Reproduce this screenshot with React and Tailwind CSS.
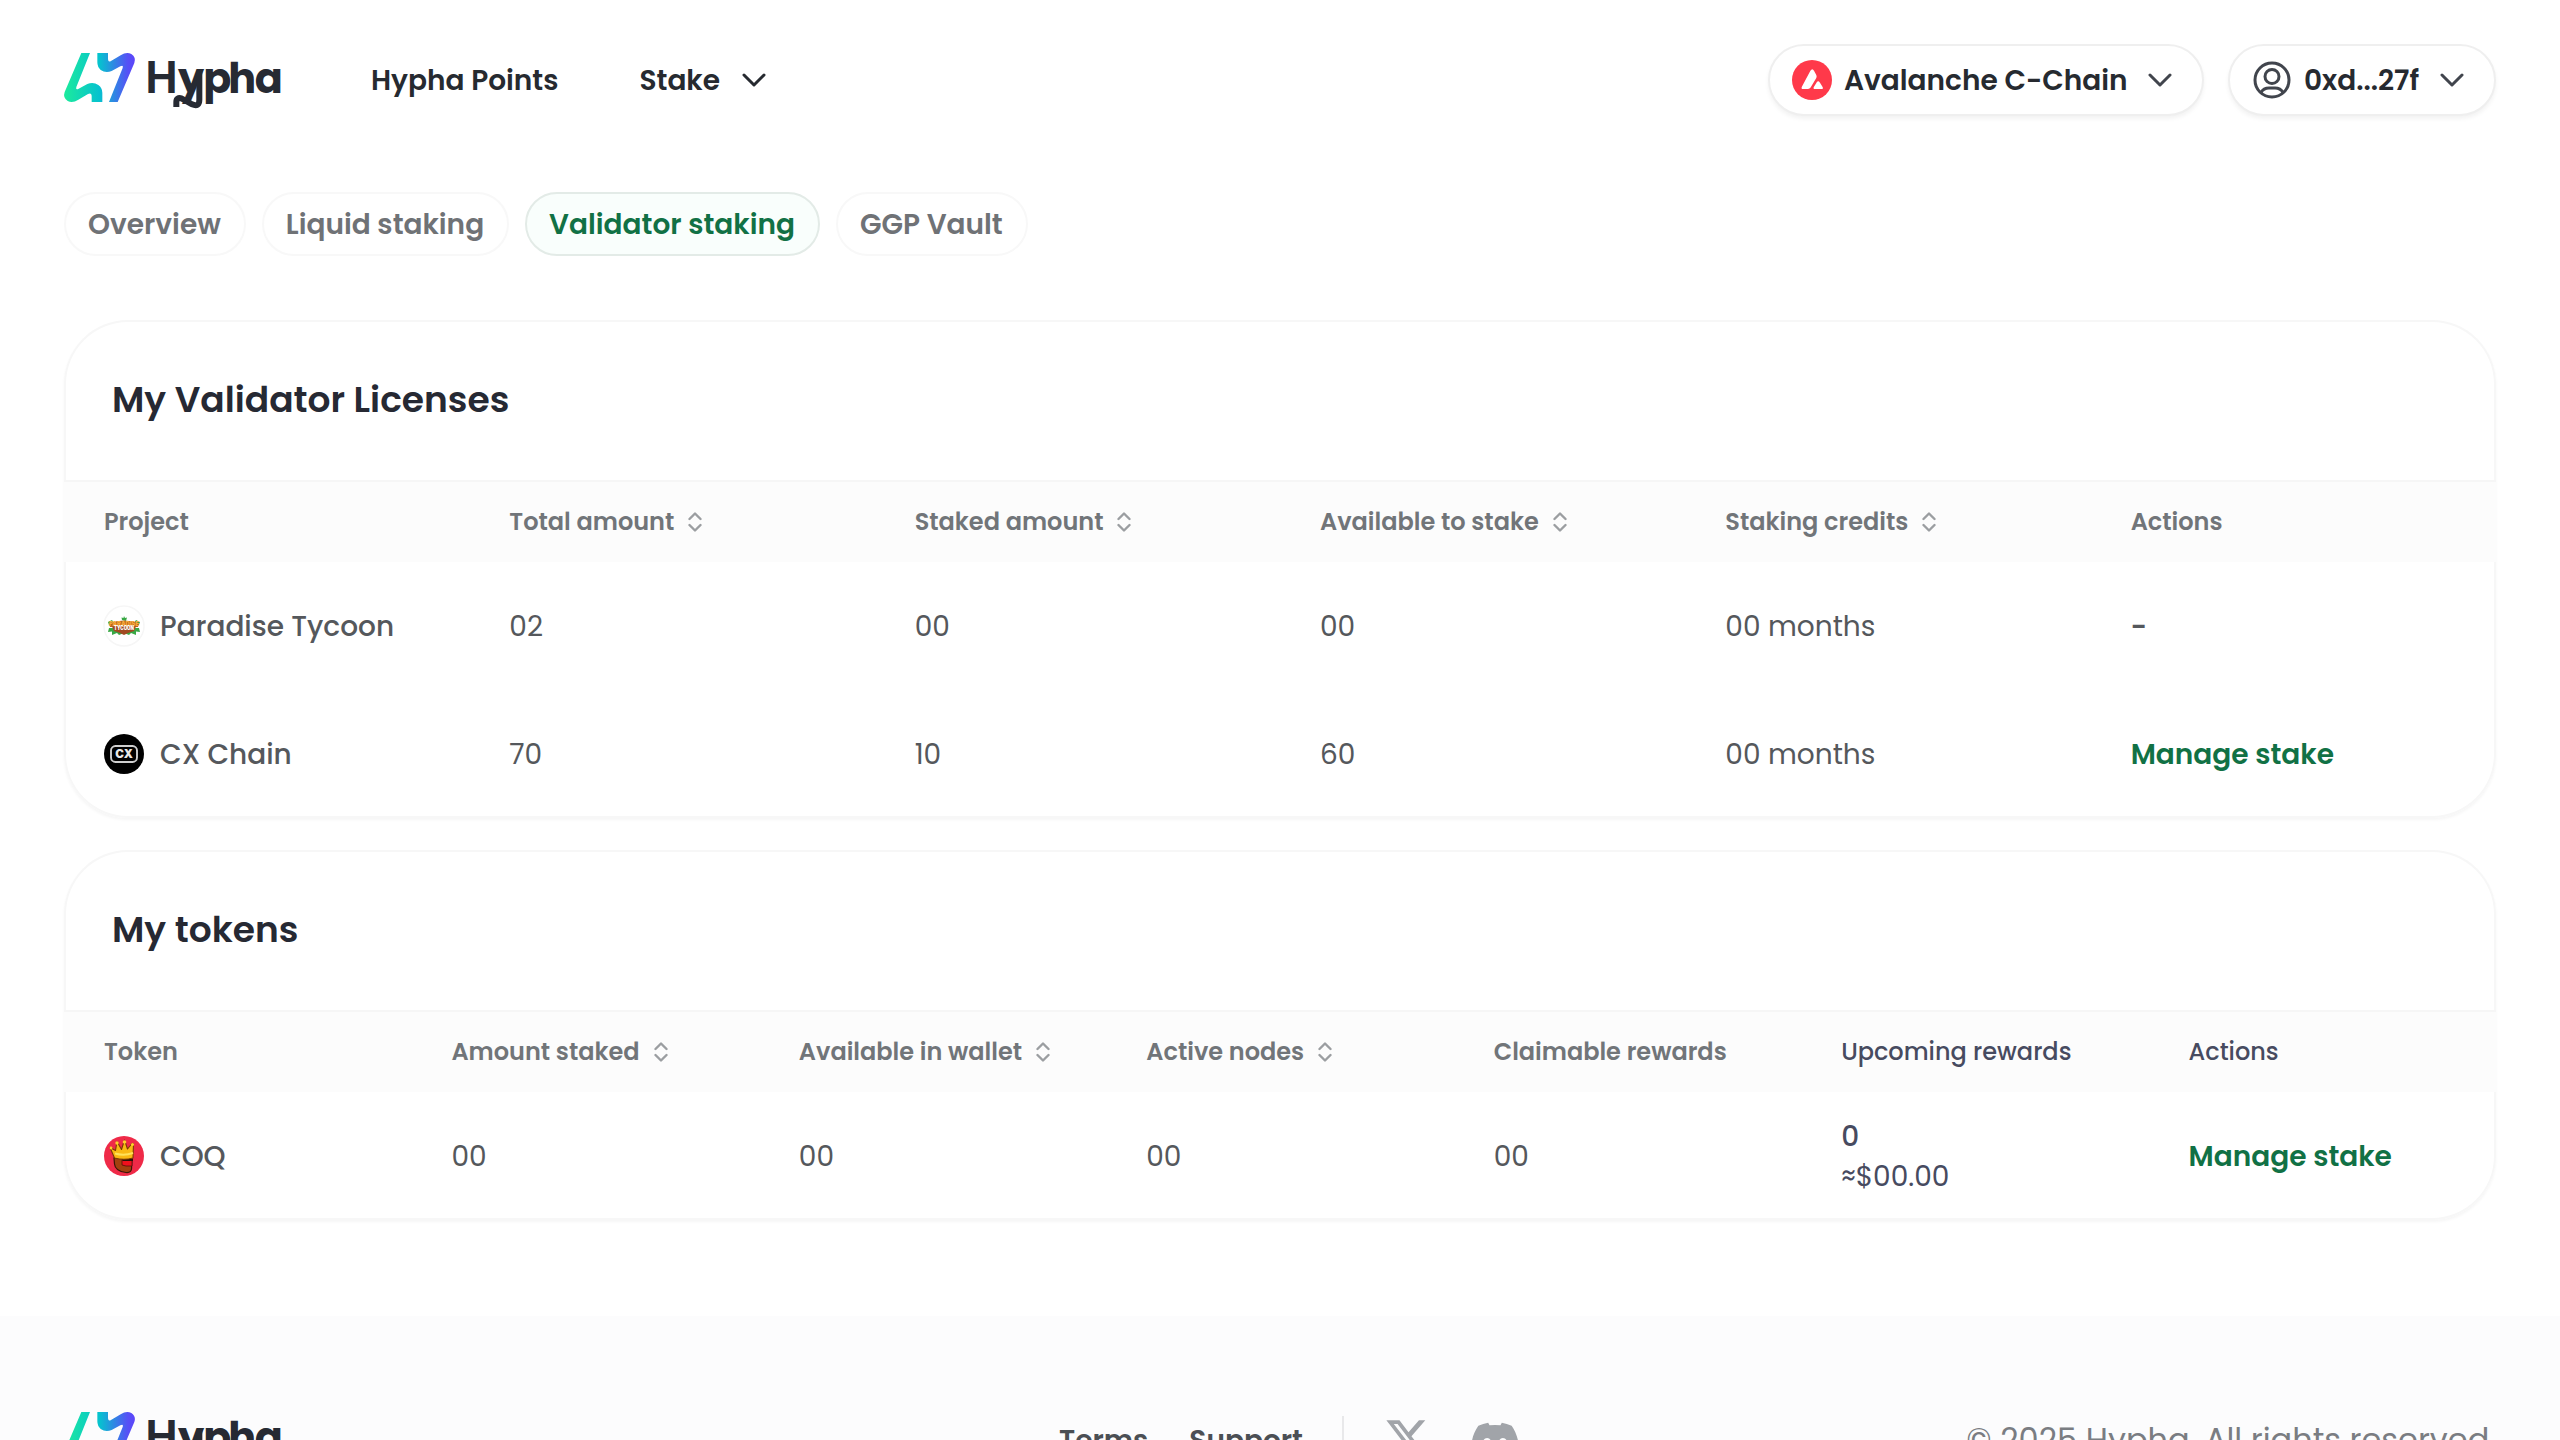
import { FaDiscord } from "react-icons/fa6";

function Logo({ id }) {
  return (
    <svg viewBox="72 60 654 177" className="h-[59px] w-[218px] shrink-0 overflow-visible">
      <defs>
        <linearGradient id={id} gradientUnits="userSpaceOnUse" x1="72" y1="0" x2="285" y2="0">
          <stop offset="0" stopColor="#1ceb9c" />
          <stop offset="0.5" stopColor="#06c2cf" />
          <stop offset="0.9" stopColor="#5650f6" />
          <stop offset="1" stopColor="#5c45fa" />
        </linearGradient>
      </defs>
      <path
        d="M124 66H150L109 168Q106 178 116 173L142 159Q160 151 175 162Q187 171 187 185V213H155V194Q154 184 144 189L115 206Q98 217 83 210Q68 200 74 183Z"
        fill={`url(#${id})`}
      />
      <path
        d="M233 213H207L248 111Q251 101 241 106L215 120Q197 128 182 117Q172 108 172 94V66H204V85Q205 95 213 90L242 73Q259 62 274 69Q289 79 283 96Z"
        fill={`url(#${id})`}
      />
      <text
        x="316 414 490 565 644"
        y="187"
        fontSize="124"
        fill="#262a33"
        className="font-['Poppins',sans-serif] font-bold"
      >
        <tspan fontSize="136" className="font-semibold">H</tspan>ypha
      </text>
      <path
        d="M409 228V213Q409 197 426 203L456 220Q478 229 478 206V119"
        fill="none"
        stroke="#262a33"
        strokeWidth="18"
      />
    </svg>
  );
}

function Chevron({ className = "" }) {
  return (
    <svg viewBox="0 0 24 14" className={`h-[14px] w-6 shrink-0 ${className}`} fill="none" stroke="currentColor" strokeWidth="3" strokeLinecap="round" strokeLinejoin="round">
      <path d="M2 2l10 10L22 2" />
    </svg>
  );
}

function SortIcon() {
  return (
    <svg viewBox="0 0 14 20" className="h-5 w-[14px] shrink-0 text-[#9b9ea1]" fill="none" stroke="currentColor" strokeWidth="2.4" strokeLinecap="round" strokeLinejoin="round">
      <path d="M1.5 7L7 1.5L12.5 7M1.5 13L7 18.5L12.5 13" />
    </svg>
  );
}

function AvaxIcon() {
  return (
    <svg viewBox="0 0 40 40" className="size-10 shrink-0">
      <circle cx="20" cy="20" r="20" fill="#ff394a" />
      <path d="M18.4 10.8Q20.3 7.8 22 10.8L24.3 15Q25 16.5 24.3 18L18.6 27.6Q17.7 29 16 29H11.3Q8.6 29 10 26.4Z" fill="#fff" />
      <path d="M24.6 22.5Q26.2 20 27.8 22.5L30.6 27Q31.5 29 29.6 29H23Q20.8 29 21.8 27Z" fill="#fff" />
    </svg>
  );
}

function UserIcon() {
  return (
    <svg viewBox="0 0 38 38" className="size-[38px] shrink-0" fill="none" stroke="#41454d" strokeWidth="3">
      <circle cx="19" cy="19" r="17" />
      <circle cx="19" cy="15.5" r="7" />
      <path d="M8 31.5Q10.5 27 16 27H22Q27.5 27 30 31.5" />
    </svg>
  );
}

function ParadiseIcon() {
  return (
    <svg viewBox="0 0 40 40" className="size-10 shrink-0 overflow-visible">
      <circle cx="20" cy="20" r="20" fill="#fff" stroke="#f6f6f6" strokeWidth="1.5" />
      <path d="M18 14L17.5 11.5L19.5 12L20 10L21 12L23 11.5L22 15ZM4 16L8 14L10 17L5 19ZM36 16L32 14L30 17L35 19ZM5 22H35L36 26L32 25.5L32 29L27 27L25 29L20 27L15 29L13 27L8 29L8 25.5L4 26Z" fill="#39a845" />
      <path d="M5 17Q20 12 35 17L34 21H6Z" fill="#b9661a" />
      <path d="M8 20.5H32L30 25L24 27L20 29L16 27L10 25Z" fill="#a14a22" />
      <text x="20" y="19.5" textAnchor="middle" fontSize="6.5" textLength="30" lengthAdjust="spacingAndGlyphs" fill="#f6a93b" className="font-['Inter',sans-serif] font-black">PARADISE</text>
      <text x="20" y="24" textAnchor="middle" fontSize="5.5" textLength="20" lengthAdjust="spacingAndGlyphs" fill="#fff" className="font-['Inter',sans-serif] font-black">TYCOON</text>
    </svg>
  );
}

function CxIcon() {
  return (
    <svg viewBox="0 0 40 40" className="size-10 shrink-0">
      <circle cx="20" cy="20" r="20" fill="#000" />
      <rect x="7" y="12" width="26" height="16" rx="4.5" fill="none" stroke="#cfcfcf" strokeWidth="1.9" />
      <text x="20" y="24.3" textAnchor="middle" fontSize="12" textLength="17.5" lengthAdjust="spacingAndGlyphs" fill="#e8e8e8" className="font-['Inter',sans-serif] font-black">CX</text>
    </svg>
  );
}

function CoqIcon() {
  return (
    <svg viewBox="0 0 40 40" className="size-10 shrink-0">
      <circle cx="20" cy="20" r="20" fill="#ef2a48" />
      <path d="M10 22H28L27.5 33Q27 37 22 36.5Q11 35 10.5 28Z" fill="#a3400f" stroke="#3c1606" strokeWidth="1.2" />
      <path d="M18 24H28V30H22L18 29Z" fill="#f0101c" stroke="#5a0a0a" strokeWidth="0.8" />
      <path d="M17 22.5H29V25H19Z" fill="#2a1208" />
      <path d="M10.5 22L6 11.5L11.5 14.5L13 5.5L17.5 13.5L20.5 4L23.5 13L28 7.5L29.5 8L29 22Q20 24.5 10.5 22Z" fill="#f9b913" stroke="#7b3a05" strokeWidth="1.1" strokeLinejoin="round" />
      <path d="M11 17.5Q20 20 29 17" fill="none" stroke="#ffe25a" strokeWidth="2" />
      <circle cx="20.5" cy="6" r="1.8" fill="#ffd02c" />
      <circle cx="13" cy="7" r="1.7" fill="#ffd02c" />
      <circle cx="28.5" cy="8.5" r="1.5" fill="#ffd02c" />
      <circle cx="7" cy="12" r="1.4" fill="#ffd02c" />
    </svg>
  );
}

function XIcon() {
  return (
    <svg viewBox="0 0 24 24" className="size-[46px] shrink-0" fill="#a1a4a9">
      <path d="M18.244 2.25h3.308l-7.227 8.26 8.502 11.24H16.17l-5.214-6.817L4.99 21.75H1.68l7.73-8.835L1.254 2.25H8.08l4.713 6.231zm-1.161 17.52h1.833L7.084 4.126H5.117z" />
    </svg>
  );
}

function Tab({ active, children }) {
  return (
    <div
      className={`flex h-16 items-center rounded-full border-2 pl-[22px] pr-[23px] pt-[2px] text-[28px] font-semibold ${
        active ? "border-[#e3ebe7] bg-[#f9fefc] text-[#117145]" : "border-[#f8f8f8] bg-white text-[#6f7276]"
      }`}
    >
      {children}
    </div>
  );
}

function Head({ sort, dark, children }) {
  return (
    <div className={`flex items-center gap-[14px] pl-10 pt-[2px] text-[24px] ${dark ? "font-medium text-[#474b60]" : "font-semibold text-[#717579]"}`}>
      {children}
      {sort && <SortIcon />}
    </div>
  );
}

function Cell({ icon, className = "", children }) {
  return (
    <div className={`flex items-center gap-4 pl-10 text-[28px] ${className || "text-[#55585c]"}`}>
      {icon}
      <span className="pt-[2px]">{children}</span>
    </div>
  );
}

function Card({ title, children }) {
  return (
    <section className="overflow-hidden rounded-[64px] bg-white shadow-[inset_0_0_0_2px_#f7f7f7,0_2px_3px_#f6f6f6]">
      <h2 className="flex h-40 items-center pl-12 text-[36px] font-semibold text-[#262933]">{title}</h2>
      {children}
    </section>
  );
}

const headRow = "grid h-[82px] border-y-2 border-t-[#f6f6f6] border-b-transparent bg-[#fcfcfc]";
const nameCell = "font-medium text-[#55585c]";
const linkCell = "font-semibold text-[#117145]";

export default function App() {
  return (
    <div className="h-[1440px] w-[2560px] overflow-hidden bg-white font-['Poppins','Inter',sans-serif] leading-[1.5] whitespace-nowrap">
      <header className="flex h-40 items-center px-16 text-[28px] font-semibold text-[#262a30]">
        <Logo id="mark-top" />
        <span className="ml-[89px] pt-[2px]">Hypha Points</span>
        <span className="ml-[81px] pt-[2px]">Stake</span>
        <Chevron className="ml-[22px]" />
        <div className="ml-auto flex gap-6">
          <div className="flex h-[72px] w-[436px] items-center rounded-full border-2 border-[#efefef] bg-white pl-[22px] shadow-[0_3px_4px_#f3f3f3]">
            <AvaxIcon />
            <span className="ml-3 pt-[2px]">Avalanche C-Chain</span>
            <Chevron className="ml-5 text-[#41454d]" />
          </div>
          <div className="flex h-[72px] w-[268px] items-center rounded-full border-2 border-[#efefef] bg-white pl-[23px] shadow-[0_3px_4px_#f3f3f3]">
            <UserIcon />
            <span className="ml-[13px] pt-[2px]">0xd...27f</span>
            <Chevron className="ml-[21px] text-[#41454d]" />
          </div>
        </div>
      </header>

      <nav className="mt-8 flex gap-4 px-16">
        <Tab>Overview</Tab>
        <Tab>Liquid staking</Tab>
        <Tab active>Validator staking</Tab>
        <Tab>GGP Vault</Tab>
      </nav>

      <main className="mt-16 flex flex-col gap-8 px-16">
        <Card title="My Validator Licenses">
          <div className={`${headRow} grid-cols-6`}>
            <Head>Project</Head>
            <Head sort>Total amount</Head>
            <Head sort>Staked amount</Head>
            <Head sort>Available to stake</Head>
            <Head sort>Staking credits</Head>
            <Head>Actions</Head>
          </div>
          <div className="grid h-32 grid-cols-6">
            <Cell icon={<ParadiseIcon />} className={nameCell}>Paradise Tycoon</Cell>
            <Cell>02</Cell>
            <Cell>00</Cell>
            <Cell>00</Cell>
            <Cell>00 months</Cell>
            <Cell className="font-semibold text-[#55585c]">-</Cell>
          </div>
          <div className="grid h-32 grid-cols-6">
            <Cell icon={<CxIcon />} className={nameCell}>CX Chain</Cell>
            <Cell>70</Cell>
            <Cell>10</Cell>
            <Cell>60</Cell>
            <Cell>00 months</Cell>
            <Cell className={linkCell}>Manage stake</Cell>
          </div>
        </Card>

        <Card title="My tokens">
          <div className={`${headRow} grid-cols-7`}>
            <Head>Token</Head>
            <Head sort>Amount staked</Head>
            <Head sort>Available in wallet</Head>
            <Head sort>Active nodes</Head>
            <Head>Claimable rewards</Head>
            <Head dark>Upcoming rewards</Head>
            <Head dark>Actions</Head>
          </div>
          <div className="grid h-32 grid-cols-7">
            <Cell icon={<CoqIcon />} className={nameCell}>COQ</Cell>
            <Cell>00</Cell>
            <Cell>00</Cell>
            <Cell>00</Cell>
            <Cell>00</Cell>
            <div className="flex flex-col justify-center pl-10 pt-[2px] text-[28px] leading-10 text-[#474b60]">
              <span className="font-medium">0</span>
              <span>≈$00.00</span>
            </div>
            <Cell className={linkCell}>Manage stake</Cell>
          </div>
        </Card>
      </main>

      <footer className="mt-24 flex h-60 items-start bg-[#fcfcfd] px-16 pt-[94px]">
        <Logo id="mark-bottom" />
        <div className="ml-[777px] flex h-[60px] items-center text-[28px] font-semibold text-[#4b4f54]">
          <span className="pt-[2px]">Terms</span>
          <span className="ml-[41px] pt-[2px]">Support</span>
          <div className="mb-2 ml-[39px] h-10 w-[2px] bg-[#e8e8ea]" />
          <div className="ml-10 flex items-center gap-[39px] pb-[2px]">
            <XIcon />
            <FaDiscord className="mt-[3px] size-[52px] text-[#a1a4a9]" />
          </div>
        </div>
        <div className="ml-auto flex h-[60px] items-center text-[32px] text-[#7a7d82]">
          © 2025 Hypha. All rights reserved.
        </div>
      </footer>
    </div>
  );
}
